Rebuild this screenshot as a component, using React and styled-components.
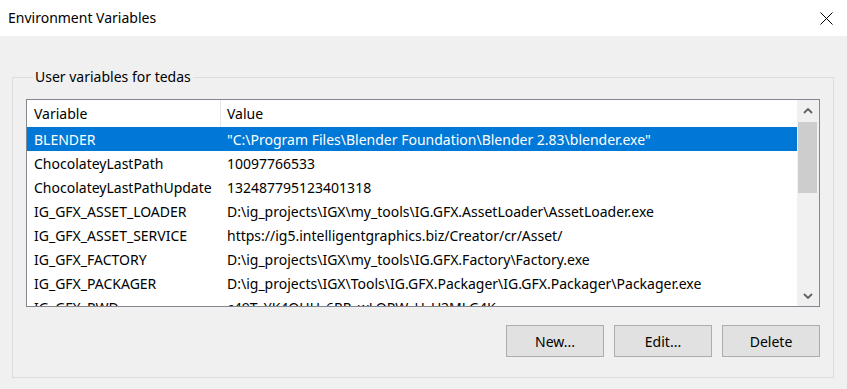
import React from 'react'
import styled, { createGlobalStyle } from 'styled-components'

const GlobalStyle = createGlobalStyle`
  html, body {
    margin: 0;
    padding: 0;
    background: #f0f0f0;
  }
  body {
    font-family: "Noto Sans", "Open Sans", sans-serif;
    font-size: 14px;
    color: #000;
  }
`

const variables = [
  { name: 'BLENDER', value: '"C:\\Program Files\\Blender Foundation\\Blender 2.83\\blender.exe"' },
  { name: 'ChocolateyLastPath', value: '10097766533' },
  { name: 'ChocolateyLastPathUpdate', value: '132487795123401318' },
  { name: 'IG_GFX_ASSET_LOADER', value: 'D:\\ig_projects\\IGX\\my_tools\\IG.GFX.AssetLoader\\AssetLoader.exe' },
  { name: 'IG_GFX_ASSET_SERVICE', value: 'https://ig5.intelligentgraphics.biz/Creator/cr/Asset/' },
  { name: 'IG_GFX_FACTORY', value: 'D:\\ig_projects\\IGX\\my_tools\\IG.GFX.Factory\\Factory.exe' },
  { name: 'IG_GFX_PACKAGER', value: 'D:\\ig_projects\\IGX\\Tools\\IG.GFX.Packager\\IG.GFX.Packager\\Packager.exe' },
  { name: 'IG_GFX_PWD', value: 'c49T_YK4QHU_6RR_wLQPW_U_U2MLG4K' },
]

const Window = styled.div`
  width: 847px;
  height: 389px;
  display: flex;
  flex-direction: column;
  background: #f0f0f0;
  overflow: hidden;
`

const TitleBar = styled.div`
  height: 36px;
  flex-shrink: 0;
  background: #fff;
  display: flex;
  align-items: center;
  justify-content: space-between;
  padding: 0 14px 0 8px;
`

const Title = styled.span`
  font-size: 14px;
  line-height: 20px;
`

const CloseButton = styled.button`
  width: 13px;
  height: 13px;
  padding: 0;
  border: 0;
  background: none;
  display: flex;
`

const Body = styled.div`
  flex: 1;
  padding: 31px 13px 0 12px;
`

const Group = styled.fieldset`
  margin: 0;
  padding: 12px 13px 19px 13px;
  border: 1px solid #dcdcdc;
  height: 311px;
  box-sizing: border-box;
  display: flex;
  flex-direction: column;
`

const Legend = styled.legend`
  margin-left: 7px;
  padding: 0 2px;
  line-height: 20px;
  font-size: 14px;
`

const ListBox = styled.div`
  height: 208px;
  flex-shrink: 0;
  box-sizing: border-box;
  border: 1px solid #828790;
  background: #fff;
  display: flex;
  overflow: hidden;
`

const ListContent = styled.div`
  flex: 1;
  min-width: 0;
  display: flex;
  flex-direction: column;
  overflow: hidden;
`

const Row = styled.div`
  display: grid;
  grid-template-columns: 193px 1fr;
  height: ${p => (p.$header ? 27 : 24)}px;
  flex-shrink: 0;
  align-items: center;
  white-space: nowrap;
  background: ${p => (p.$selected ? '#0078d7' : '#fff')};
  color: ${p => (p.$selected ? '#fff' : '#000')};
`

const Cell = styled.div`
  height: 100%;
  display: flex;
  align-items: center;
  overflow: hidden;
  box-sizing: border-box;
  border-left: ${p => (p.$divider ? '1px solid #e5e5e5' : '0')};
  padding-left: ${p => (p.$divider ? 6 : 7)}px;
`

const ScrollBar = styled.div`
  width: 22px;
  flex-shrink: 0;
  background: #f0f0f0;
  display: flex;
  flex-direction: column;
`

const Arrow = styled.div`
  height: 21px;
  flex-shrink: 0;
  display: flex;
  align-items: center;
  justify-content: center;
  padding-right: 1px;
`

const Track = styled.div`
  flex: 1;
  padding: 1px 2px 0 1px;
`

const Thumb = styled.div`
  height: 71px;
  background: #cdcdcd;
`

const ButtonRow = styled.div`
  margin-top: 18px;
  display: flex;
  justify-content: flex-end;
  gap: 10px;
`

const Button = styled.button`
  width: 98px;
  height: 32px;
  background: #e1e1e1;
  border: 1px solid #adadad;
  font-family: inherit;
  font-size: 14px;
  color: #000;
  padding: 0;
`

const Chevron = ({ down }) => (
  <svg width="10" height="6" viewBox="0 0 10 6">
    <path
      d={down ? 'M1 1 L5 5 L9 1' : 'M1 5 L5 1 L9 5'}
      fill="none"
      stroke="#606060"
      strokeWidth="1.8"
    />
  </svg>
)

export default function App() {
  return (
    <Window>
      <GlobalStyle />
      <TitleBar>
        <Title>Environment Variables</Title>
        <CloseButton aria-label="Close">
          <svg width="13" height="13" viewBox="0 0 13 13">
            <path d="M0.5 0.5 L12.5 12.5 M12.5 0.5 L0.5 12.5" stroke="#000" strokeWidth="1" />
          </svg>
        </CloseButton>
      </TitleBar>
      <Body>
        <Group>
          <Legend>User variables for tedas</Legend>
          <ListBox>
            <ListContent>
              <Row $header>
                <Cell>Variable</Cell>
                <Cell $divider>Value</Cell>
              </Row>
              {variables.map((v, i) => (
                <Row key={v.name} $selected={i === 0}>
                  <Cell>{v.name}</Cell>
                  <Cell>{v.value}</Cell>
                </Row>
              ))}
            </ListContent>
            <ScrollBar>
              <Arrow><Chevron /></Arrow>
              <Track><Thumb /></Track>
              <Arrow><Chevron down /></Arrow>
            </ScrollBar>
          </ListBox>
          <ButtonRow>
            <Button>New...</Button>
            <Button>Edit...</Button>
            <Button>Delete</Button>
          </ButtonRow>
        </Group>
      </Body>
    </Window>
  )
}
